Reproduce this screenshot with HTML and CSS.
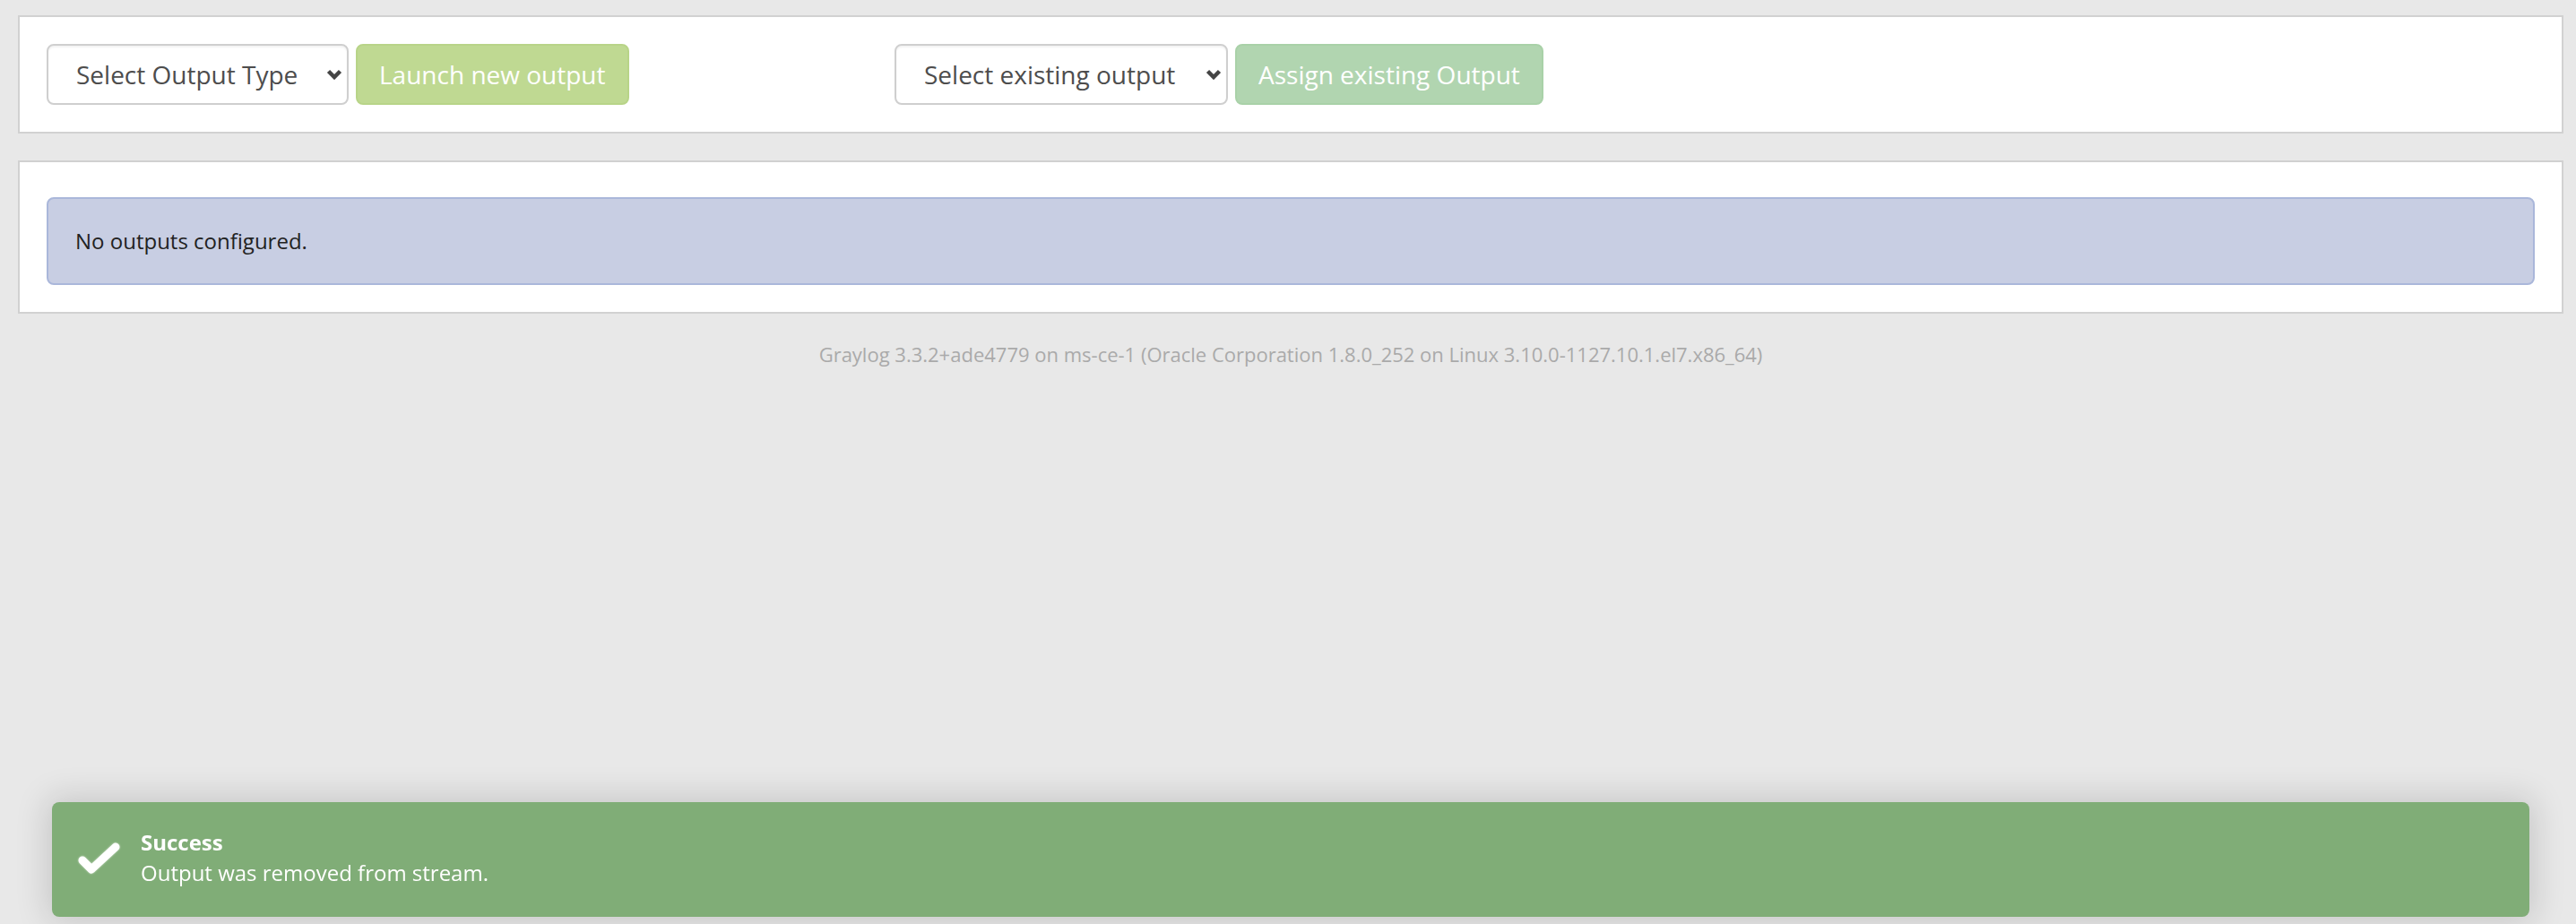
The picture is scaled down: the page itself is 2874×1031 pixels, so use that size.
FILE: index.html
```html
<!DOCTYPE html>
<html lang="en">
<head>
<meta charset="UTF-8">
<meta name="viewport" content="width=device-width, initial-scale=1.0">
<title>Stream outputs</title>
<link rel="stylesheet" href="styles.css">
</head>
<body>
    <div class="page">
        <!-- output actions -->
        <div class="panel">
            <div class="action-row">
                <div class="action-col">
                    <div class="select-wrap select-type">
                        <select class="form-select">
                            <option>Select Output Type</option>
                        </select>
                        <svg class="chevron" viewBox="0 0 18 12"><polyline points="2.5,2.5 9,9 15.5,2.5" /></svg>
                    </div>
                    <button class="btn btn-launch" disabled>Launch new output</button>
                </div>
                <div class="action-col">
                    <div class="select-wrap select-existing">
                        <select class="form-select">
                            <option>Select existing output</option>
                        </select>
                        <svg class="chevron" viewBox="0 0 18 12"><polyline points="2.5,2.5 9,9 15.5,2.5" /></svg>
                    </div>
                    <button class="btn btn-assign" disabled>Assign existing Output</button>
                </div>
                <div class="action-col"></div>
            </div>
        </div>

        <!-- output list -->
        <div class="panel">
            <div class="alert-info">No outputs configured.</div>
        </div>

        <footer class="footer">Graylog 3.3.2+ade4779 on ms-ce-1 (Oracle Corporation 1.8.0_252 on Linux 3.10.0-1127.10.1.el7.x86_64)</footer>
    </div>

    <!-- notification -->
    <div class="toast">
        <svg class="toast-icon" viewBox="0 0 50 40"><polyline points="6,21 16,31 43,6" /></svg>
        <div class="toast-text">
            <div class="toast-title">Success</div>
            <div>Output was removed from stream.</div>
        </div>
    </div>
</body>
</html>
```

FILE: styles.css
```css
body {
    margin: 0;
    background: #e8e8e8;
    font-family: "Open Sans", "DejaVu Sans", sans-serif;
    font-size: 24px;
    line-height: 1.42857;
    color: #222;
}
.page {
    padding: 17px 14px 0 20px;
}

/* panels */
.panel {
    background: #fff;
    border: 2px solid #d1d1d1;
    padding: 30px;
    margin-bottom: 30px;
}
.action-row {
    display: grid;
    grid-template-columns: 1fr 1fr 1fr;
    column-gap: 62px;
}
.action-col {
    display: flex;
    gap: 8px;
}

/* select box */
.select-wrap {
    position: relative;
}
.select-type {
    width: 337px;
}
.select-existing {
    width: 372px;
}
.form-select {
    appearance: none;
    -webkit-appearance: none;
    width: 100%;
    height: 68px;
    margin: 0;
    padding: 0 40px 0 31px;
    border: 2px solid #cfcfcf;
    border-radius: 8px;
    background: #fff;
    box-shadow: inset 0 2px 2px rgba(0, 0, 0, 0.05);
    font-family: inherit;
    font-size: 28px;
    color: #4d4d4d;
    outline: none;
}
.chevron {
    position: absolute; /* 셀렉트 위 화살표 */
    right: 7px;
    top: 28px;
    width: 18px;
    height: 12px;
    fill: none;
    stroke: #444;
    stroke-width: 4.5;
    pointer-events: none;
}

/* buttons */
.btn {
    height: 68px;
    margin: 0;
    padding: 0 24px;
    border-radius: 8px;
    font-family: inherit;
    font-size: 28px;
    color: #fff;
    white-space: nowrap;
}
.btn-launch {
    background: #bfd992;
    border: 2px solid #b8d488;
}
.btn-assign {
    background: #b1d5b0;
    border: 2px solid #a9d1a8;
}

/* empty list */
.alert-info {
    margin-top: 9px;
    padding: 30px;
    border: 2px solid #aab7da;
    border-radius: 8px;
    background: #c8cee3;
    color: #222;
}
.footer {
    margin-top: 1px;
    text-align: center;
    font-size: 22px;
    line-height: 31px;
    color: #aaa;
}

/* notification */
.toast {
    position: fixed; /* 화면 아래 고정 */
    left: 58px;
    right: 52px;
    bottom: 8px;
    height: 128px;
    box-sizing: border-box;
    display: flex;
    align-items: center;
    gap: 21px;
    padding: 0 0 4px 28px;
    border-radius: 8px;
    background: #80ad77;
    box-shadow: 0 0 36px 6px rgba(0, 0, 0, 0.14);
    color: #fff;
}
.toast-icon {
    width: 50px;
    height: 40px;
    margin-top: 4px;
    fill: none;
    stroke: #fff;
    stroke-width: 9;
    stroke-linecap: round;
    stroke-linejoin: round;
    filter: drop-shadow(0 0 1px rgba(255, 255, 255, 0.6));
}
.toast-title {
    font-weight: bold;
}
```
